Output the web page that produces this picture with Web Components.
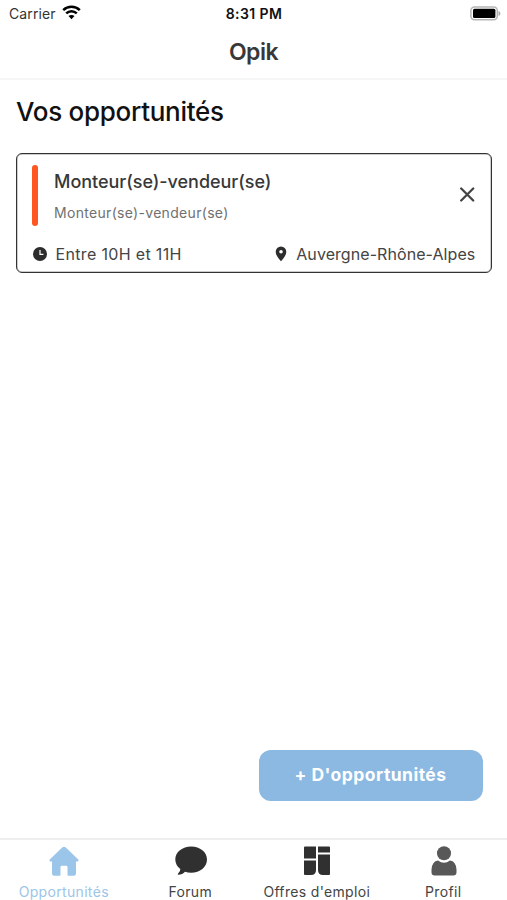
<!DOCTYPE html>
<html lang="fr"><head><meta charset="utf-8"><title>Opik</title>
<style>html,body{margin:0;height:100%;background:#fff}body{overflow:hidden}</style></head><body>
<opik-app></opik-app>
<script>
const define = (name, html) => {
  const t = document.createElement('template');
  t.innerHTML = html;
  customElements.define(name, class extends HTMLElement {
    constructor() { super(); this.attachShadow({mode: 'open'}).append(t.content.cloneNode(true)); }
  });
};

define('status-bar', `<style>
:host{display:grid;grid-template-columns:1fr auto 1fr;align-items:center;height:27px;padding:0 7px 0 9px;box-sizing:border-box;color:#111;font-size:14px}
.left{display:flex;align-items:center;gap:6px;color:#333;letter-spacing:.1px}
.time{font-weight:600;color:#111;font-size:14px;letter-spacing:.42px;margin-right:1px}
.battery{justify-self:end;margin-right:-1px}svg{display:block}
.left svg{margin-top:-2px}
</style>
<div class="left"><span>Carrier</span><svg width="19" height="15" viewBox="0 0 19 15" fill="none" stroke="#000" stroke-width="2.500"><path d="M1.200 5.200C5.800.700 13.200.700 17.800 5.200"/><path d="M4.200 8.300c3-2.900 7.600-2.900 10.600 0"/><path d="M6.500 11.100c1.700-1.600 4.300-1.600 6 0L9.500 14.200z" fill="#000" stroke="none"/></svg></div>
<span class="time">8:31 PM</span>
<svg class="battery" width="31" height="15" viewBox="0 0 31 15"><rect x=".9" y=".9" width="26.400" height="12.800" rx="3.600" fill="#fff" stroke="#b5b5b5" stroke-width="1.500"/><rect x="3" y="2.700" width="22.400" height="9.200" rx="1.500"/><path d="M28.500 5c2.500.8 2.500 4.200 0 5z" fill="#aaa"/></svg>`);

define('title-bar', `<style>
:host{display:flex;align-items:center;justify-content:center;height:53px;box-sizing:border-box;padding-bottom:1px;border-bottom:2px solid #f6f6f6;font-size:23px;font-weight:600;letter-spacing:-.5px;color:#383838}
</style><slot></slot>`);

define('job-card', `<style>
:host{display:flex;flex-direction:column;height:120px;box-sizing:border-box;border:1px solid #333;box-shadow:inset 0 0 0 .5px #999;border-radius:6px;padding:11px 15px 0;color:#333}
.top{display:flex;height:61px}
.bar{width:6px;border-radius:3px;background:#ff5722;margin-right:16px}
.text{display:flex;flex-direction:column;flex:1}
.name{font-size:18px;line-height:22px;margin-top:6px;font-weight:500;color:#383838;letter-spacing:-.04px}
.sub{font-size:14px;line-height:18px;margin-top:11px;color:#707070;letter-spacing:.31px}
.close{margin:22px 1px 0 0}
.foot{display:flex;justify-content:space-between;align-items:center;height:22px;margin-top:17px;font-size:16px;line-height:22px;color:#444}
.foot div{display:flex;align-items:center}svg{display:block}
.when{gap:8.500px;padding-left:1px}.where{gap:9px;margin-right:.7px}
.when span{letter-spacing:.34px}.where span{letter-spacing:.07px}
</style>
<div class="top"><div class="bar"></div><div class="text"><span class="name"><slot name="name"></slot></span><span class="sub"><slot name="sub"></slot></span></div>
<svg class="close" width="15" height="15" viewBox="0 0 15 15" fill="none" stroke="#444" stroke-width="2.300" stroke-linecap="round"><path d="M1.200 1.500l12 12M13.200 1.500l-12 12"/></svg></div>
<div class="foot"><div class="when"><svg width="14" height="14" viewBox="0 0 14 14"><circle cx="7" cy="7" r="7" fill="#2d2d2d"/><path d="M7 2.900v4.500h3.400" fill="none" stroke="#fff" stroke-width="1.200"/></svg><span><slot name="when"></slot></span></div>
<div class="where"><svg width="12" height="16" viewBox="0 0 12 16"><path d="M6 .500A5.300 5.300 0 0 0 .7 5.800C.7 9.400 4 13 6 15.300c2-2.300 5.300-5.900 5.300-9.500A5.300 5.300 0 0 0 6 .500zM6 4a1.800 1.800 0 1 1 0 3.600a1.800 1.800 0 0 1 0-3.600z" fill="#2d2d2d" fill-rule="evenodd"/></svg><span><slot name="where"></slot></span></div></div>`);

define('add-button', `<style>
:host{display:flex;align-items:center;justify-content:center;width:224px;height:51px;box-sizing:border-box;padding-bottom:1px;border-radius:12px;background:#8bb9e2;color:#fff;font-size:17.500px;font-weight:700;letter-spacing:.46px}
</style><slot></slot>`);

define('tab-item', `<style>
:host{display:flex;flex-direction:column;align-items:center;flex:1;color:#333;font-size:14px;letter-spacing:.33px;padding-top:6px}
.icon{height:32px;display:flex}.label{line-height:18px;margin:5px 1px 0 0;white-space:nowrap;color:var(--label,#444)}
</style><div class="icon"><slot name="icon"></slot></div><div class="label"><slot></slot></div>`);

define('tab-bar', `<style>:host{display:flex;height:62px;box-sizing:border-box;border-top:2px solid #eee;padding-left:1px}</style><slot></slot>`);

define('opik-app', `<style>
:host{display:flex;flex-direction:column;height:900px;width:507px;overflow:hidden;background:#fff;font-family:Inter,"Liberation Sans",sans-serif}
main{flex:1;display:flex;flex-direction:column;padding:15px 15px 37.500px 16px}
h1{margin:0 0 24px;font-size:26px;line-height:34px;font-weight:500;letter-spacing:-.28px;color:#111}
add-button{margin:auto 9.500px 0 auto}
</style>
<status-bar></status-bar><title-bar>Opik</title-bar>
<main><h1>Vos opportunités</h1>
<job-card><span slot="name">Monteur(se)-vendeur(se)</span><span slot="sub">Monteur(se)-vendeur(se)</span><span slot="when">Entre 10H et 11H</span><span slot="where">Auvergne-Rhône-Alpes</span></job-card>
<add-button>+ D'opportunités</add-button></main>
<tab-bar>
<tab-item style="--label:#9cc5ea"><svg slot="icon" width="30" height="32" viewBox="0 0 30 32"><path d="M13.500 1.300q1.500-1.200 3 0L29 13.300q1.300 1.600-.4 2.300H27V27.500q0 2.200-2.200 2.200H19.500q-1 0-1-1V21q0-1.200-1.200-1.200h-4.600q-1.200 0-1.200 1.200v7.700q0 1-1 1H5.200Q3 29.700 3 27.500V15.600H1.400Q-.300 14.900 1 13.300z" fill="#9cc5ea"/></svg>Opportunités</tab-item>
<tab-item><svg slot="icon" width="32" height="32" viewBox="0 0 32 32"><path d="M16.200.500C25 .500 32 6 32 13.500S25 26.700 16.200 26.700q-3.400 0-6.200-1Q7.600 28.600 3.100 28.700q-.8-.3 0-1.100 2.500-2.300 2.200-4.500Q.3 19 .3 13.500C.3 6 7.400.500 16.200.500z" fill="#303030"/></svg>Forum</tab-item>
<tab-item><svg slot="icon" width="28" height="32" viewBox="0 0 28 32" fill="#303030"><path d="M2 .500H13V12.500H1V1.500q0-1 1-1zM15 .500H26q1 0 1 1V6.500H15zM1 14.500H13V24q0 5-5 5H2q-1 0-1-1zM15 8.500H27V28q0 1-1 1H20q-5 0-5-5z"/></svg>Offres d'emploi</tab-item>
<tab-item><svg slot="icon" width="26" height="32" viewBox="0 0 26 32" fill="#585858"><circle cx="13" cy="7.300" r="7"/><path d="M7 14.500q6 4.400 12 0 6 .8 6.500 9v2.700q0 3.300-3.300 3.300H3.800q-3.300 0-3.300-3.300v-2.700Q1 15.300 7 14.500z"/></svg>Profil</tab-item>
</tab-bar>`);
</script></body></html>
